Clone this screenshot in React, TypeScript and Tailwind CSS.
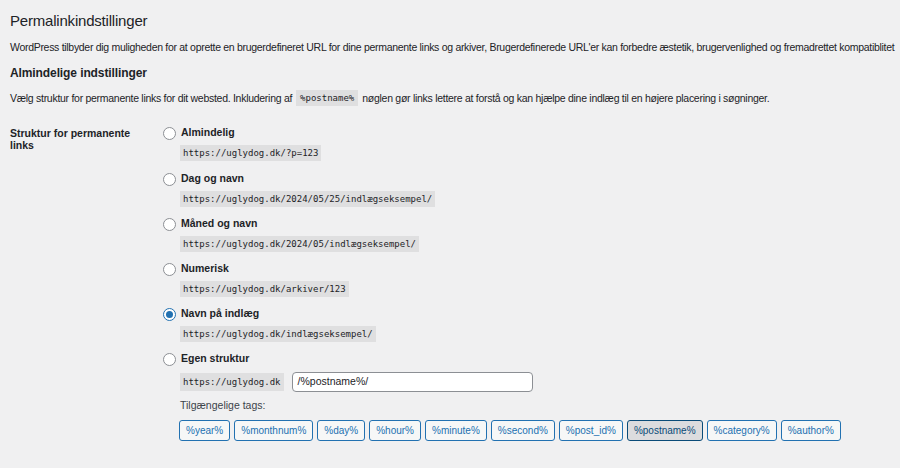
import React from "react";

const sans = { fontFamily: '"Liberation Sans", Arial, sans-serif' };

function Radio({ checked }: { checked?: boolean }) {
  return (
    <span
      className={
        "inline-flex h-[13px] w-[13px] shrink-0 items-center justify-center rounded-full border bg-white " +
        (checked ? "border-[#2271b1]" : "border-[#8c8f94]")
      }
    >
      {checked ? <span className="h-[7px] w-[7px] rounded-full bg-[#2271b1]" /> : null}
    </span>
  );
}

const mono = "font-['DejaVu_Sans_Mono',monospace]";

const options = [
  { label: "Almindelig", url: "https://uglydog.dk/?p=123" },
  { label: "Dag og navn", url: "https://uglydog.dk/2024/05/25/indlægseksempel/" },
  { label: "Måned og navn", url: "https://uglydog.dk/2024/05/indlægseksempel/" },
  { label: "Numerisk", url: "https://uglydog.dk/arkiver/123" },
  { label: "Navn på indlæg", url: "https://uglydog.dk/indlægseksempel/", checked: true },
];

const tags = [
  "%year%",
  "%monthnum%",
  "%day%",
  "%hour%",
  "%minute%",
  "%second%",
  "%post_id%",
  "%postname%",
  "%category%",
  "%author%",
];

export default function App() {
  return (
    <div className="h-[468px] overflow-hidden bg-[#f0f0f1] px-[10px] text-[#1d2327]" style={sans}>
      <h1 className="pt-[9px] text-[15px] leading-[24px] font-normal tracking-[-0.2px]">Permalinkindstillinger</h1>
      <p className="mt-[6px] whitespace-nowrap text-[10.5px] leading-[16px] tracking-[-0.3px]">
        WordPress tilbyder dig muligheden for at oprette en brugerdefineret URL for dine permanente links og arkiver, Brugerdefinerede URL'er kan forbedre æstetik, brugervenlighed og fremadrettet kompatiblitet
      </p>
      <h2 className="mt-[9px] text-[12px] font-bold leading-[18px] tracking-[-0.1px]">Almindelige indstillinger</h2>
      <p className="mt-[8px] flex items-center whitespace-nowrap text-[10.5px] leading-[16px] tracking-[-0.28px]">
        <span>Vælg struktur for permanente links for dit websted. Inkludering af</span>
        <code className={"mx-[4px] inline-block bg-[#dfdfe0] px-[4px] text-[9px] leading-[16px] tracking-normal " + mono}>
          %postname%
        </code>
        <span>nøglen gør links lettere at forstå og kan hjælpe dine indlæg til en højere placering i søgninger.</span>
      </p>
      <div className="mt-[19px] flex">
        <div className="w-[153px] shrink-0 pr-[20px] pt-[2px] text-[10.5px] font-bold leading-[12px]">
          Struktur for permanente links
        </div>
        <div className="flex flex-col">
          {options.map((o, i) => (
            <div key={o.label} className={(i === 0 ? "mb-[10px]" : "mb-[9px]") + " flex flex-col"}>
              <label className="flex h-[16px] items-center gap-[5px] text-[10.5px] font-bold">
                <Radio checked={o.checked} />
                {o.label}
              </label>
              <div className="mt-[4px] flex pl-[17px]">
                <code className={"block h-[16px] bg-[#dfdfe0] px-[3px] text-[9px] leading-[16px] text-[#1d2327] " + mono}>
                  {o.url}
                </code>
              </div>
            </div>
          ))}
          <div className="flex flex-col">
            <label className="flex h-[16px] items-center gap-[5px] text-[10.5px] font-bold">
              <Radio />
              Egen struktur
            </label>
            <div className="mt-[5px] flex items-center gap-[8px] pl-[17px]">
              <code className={"block h-[18px] bg-[#dfdfe0] px-[3px] text-[9px] leading-[18px] " + mono}>
                https://uglydog.dk
              </code>
              <div className="flex h-[20px] w-[241px] items-center rounded-[4px] border border-[#8c8f94] bg-white px-[5px] text-[10.5px]">
                /%postname%/
              </div>
            </div>
            <div className="mt-[5px] pl-[17px] text-[10.5px] leading-[16px] text-[#3c434a]">Tilgængelige tags:</div>
            <div className="mt-[7px] flex gap-[4px] pl-[16px]">
              {tags.map((t) =>
                t === "%postname%" ? (
                  <button
                    key={t}
                    className="h-[21px] whitespace-nowrap rounded-[3px] border border-[#0a4b78] bg-[#dcdcde] px-[6px] text-[10px] leading-[19px] text-[#0a4b78]"
                  >
                    {t}
                  </button>
                ) : (
                  <button
                    key={t}
                    className="h-[21px] whitespace-nowrap rounded-[3px] border border-[#2271b1] bg-[#f6f7f7] px-[6px] text-[10px] leading-[19px] text-[#2271b1]"
                  >
                    {t}
                  </button>
                )
              )}
            </div>
          </div>
        </div>
      </div>
    </div>
  );
}
